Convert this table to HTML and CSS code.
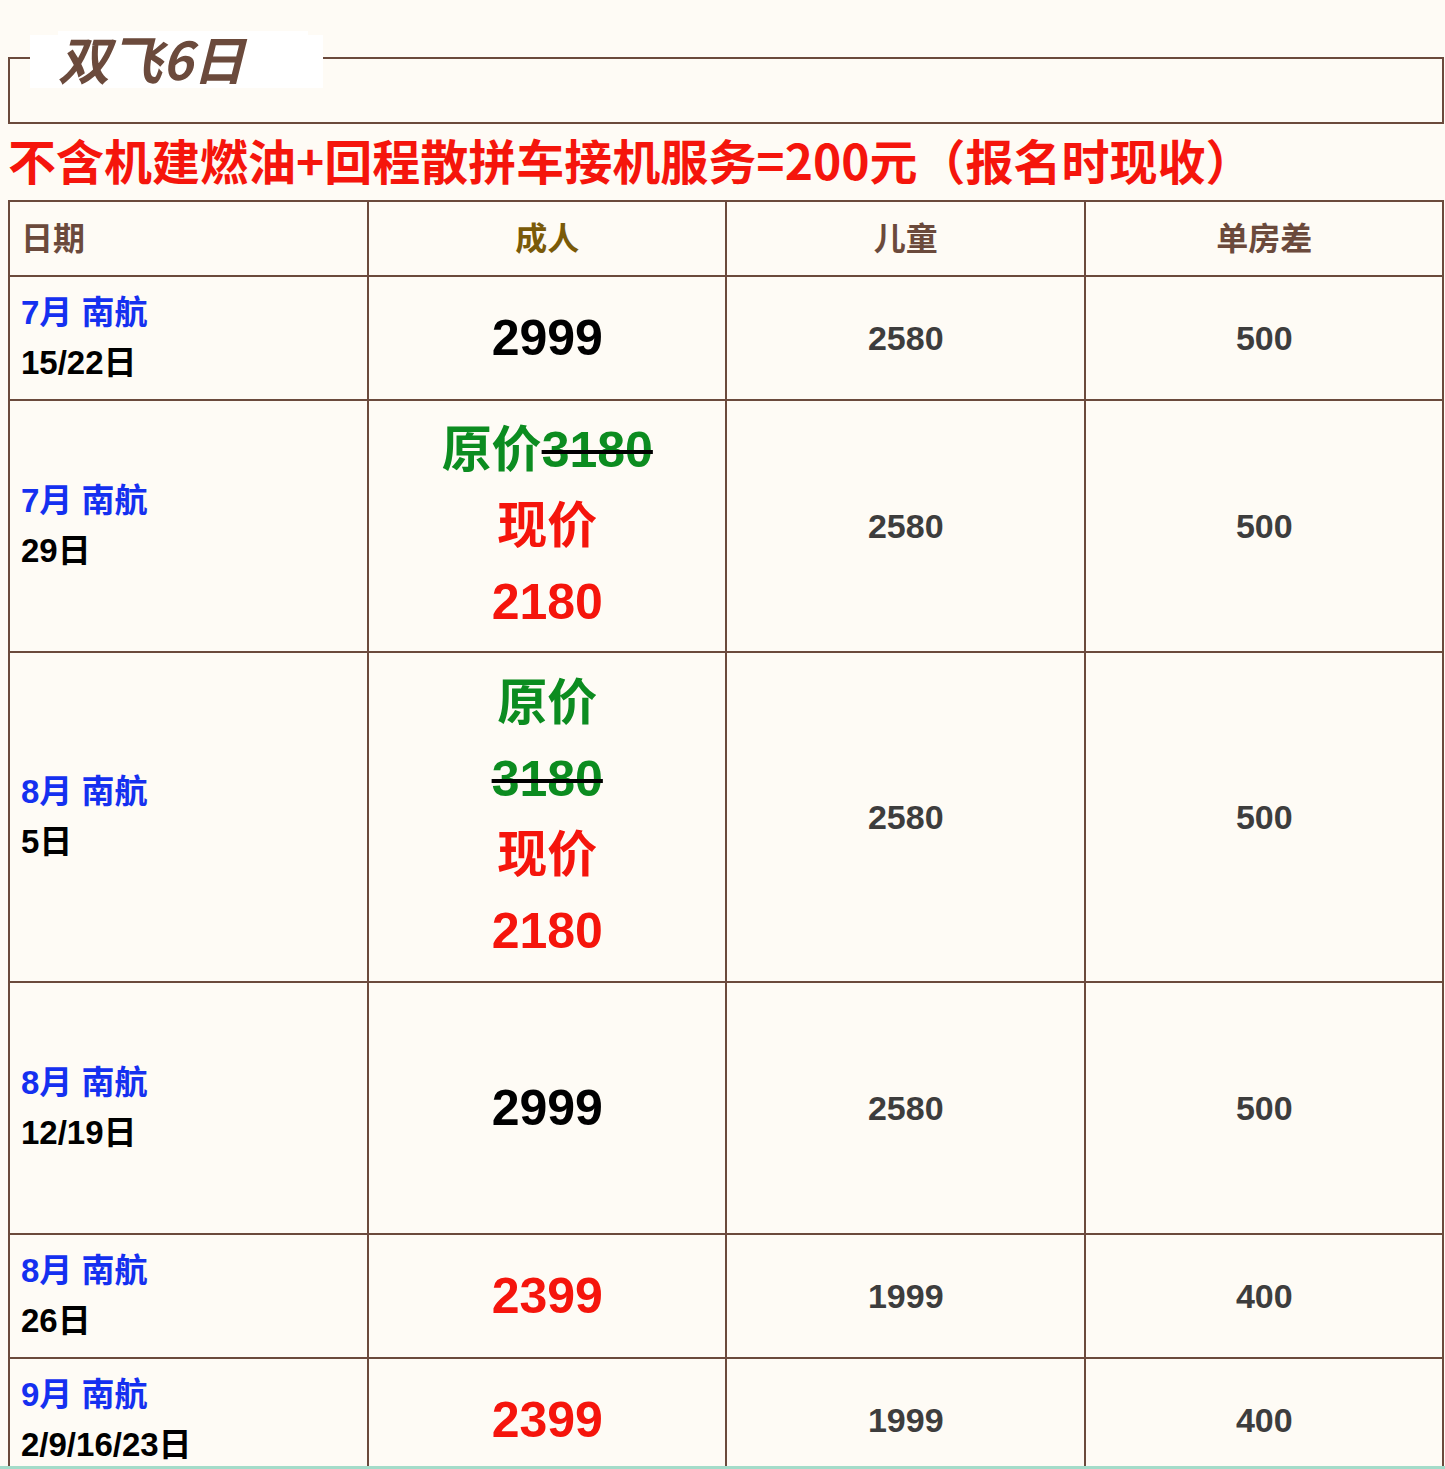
FILE: index.html
```html
<!DOCTYPE html>
<html lang="zh-CN">
<head>
<meta charset="utf-8">
<title>双飞6日</title>
<link rel="stylesheet" href="styles.css">
</head>
<body>
<div class="page">
  <div class="title-box">
    <div class="legend"><span class="legend-text">双飞6日</span></div>
  </div>
  <p class="notice">不含机建燃油+回程散拼车接机服务=200元（报名时现收）</p>
  <table class="price">
    <thead>
      <tr class="r-head">
        <th class="c-date">日期</th>
        <th class="c-adult">成人</th>
        <th>儿童</th>
        <th>单房差</th>
      </tr>
    </thead>
    <tbody>
      <tr class="r-short">
        <td class="date"><div class="month">7月 南航</div><div class="day">15/22日</div></td>
        <td class="adult"><div class="black">2999</div></td>
        <td class="num">2580</td>
        <td class="num">500</td>
      </tr>
      <tr class="r-mid">
        <td class="date"><div class="month">7月 南航</div><div class="day">29日</div></td>
        <td class="adult">
          <div class="green">原价<s class="strike"><span class="green">3180</span></s></div>
          <div class="red">现价</div>
          <div class="red">2180</div>
        </td>
        <td class="num">2580</td>
        <td class="num">500</td>
      </tr>
      <tr class="r-tall">
        <td class="date"><div class="month">8月 南航</div><div class="day">5日</div></td>
        <td class="adult">
          <div class="green">原价</div>
          <div><s class="strike"><span class="green">3180</span></s></div>
          <div class="red">现价</div>
          <div class="red">2180</div>
        </td>
        <td class="num">2580</td>
        <td class="num">500</td>
      </tr>
      <tr class="r-mid">
        <td class="date"><div class="month">8月 南航</div><div class="day">12/19日</div></td>
        <td class="adult"><div class="black">2999</div></td>
        <td class="num">2580</td>
        <td class="num">500</td>
      </tr>
      <tr class="r-short">
        <td class="date"><div class="month">8月 南航</div><div class="day">26日</div></td>
        <td class="adult"><div class="red">2399</div></td>
        <td class="num">1999</td>
        <td class="num">400</td>
      </tr>
      <tr class="r-short">
        <td class="date"><div class="month">9月 南航</div><div class="day">2/9/16/23日</div></td>
        <td class="adult"><div class="red">2399</div></td>
        <td class="num">1999</td>
        <td class="num">400</td>
      </tr>
    </tbody>
  </table>
</div>
<div class="bottom-bar"></div>
</body>
</html>
```

FILE: styles.css
```css
html, body {
  margin: 0;
  padding: 0;
  background: #fefbf5;
}

.page {
  height: 1466px;
  overflow: hidden;
  padding: 0 1px 0 8px;
}

.title-box {
  margin-top: 57px;
  height: 63px;
  border: 2px solid #6b4a3c;
}

.legend {
  display: flex;
  align-items: flex-start;
  width: 293px;
  height: 53px;
  margin: -24px 0 0 20px;
  background: #ffffff;
}

.legend-text {
  margin: -4px 0 0 28px;
  width: 250px;
  height: 53px;
  padding-bottom: 4px;
  background: #ffffff;
  font-family: "Noto Sans CJK SC", sans-serif;
  font-size: 52px;
  font-weight: bold;
  font-style: italic;
  line-height: 53px;
  color: #6b4a3c;
  white-space: nowrap;
}

.notice {
  margin: 0;
  height: 76px;
  box-sizing: border-box;
  padding-bottom: 6px;
  font-family: "Noto Sans CJK SC", sans-serif;
  font-size: 48px;
  font-weight: bold;
  line-height: 70px;
  color: #f5150c;
  white-space: nowrap;
}

.price {
  width: 100%;
  border-collapse: collapse;
  table-layout: fixed;
  font-family: "Liberation Sans", "Noto Sans CJK SC", sans-serif;
  font-weight: bold;
}

.price th,
.price td {
  border: 2px solid #6b4a3c;
  padding: 0 10px 0 11px;
  vertical-align: middle;
  text-align: center;
}

.price th {
  font-size: 32px;
  line-height: 40px;
  color: #6b4a3c;
}

.price th.c-adult {
  color: #7a5a08;
}

.price .c-date,
.price td.date {
  text-align: left;
}

.r-head { height: 75px; }
.r-short { height: 124px; }
.r-mid { height: 252px; }
.r-tall { height: 330px; }

.date {
  font-size: 33px;
  line-height: 50px;
}

.month { color: #1530f0; }
.day { color: #000000; }

.adult {
  font-size: 50px;
  line-height: 76px;
}

.black { color: #000000; }
.green { color: #0c8c20; }
.red { color: #f5150c; }

.strike {
  color: #000000;
  text-decoration: line-through;
  text-decoration-thickness: 4px;
}

.num {
  font-size: 34px;
  color: #3d3d3d;
}

.bottom-bar {
  height: 3px;
  background: #a4dcc9;
}
```
